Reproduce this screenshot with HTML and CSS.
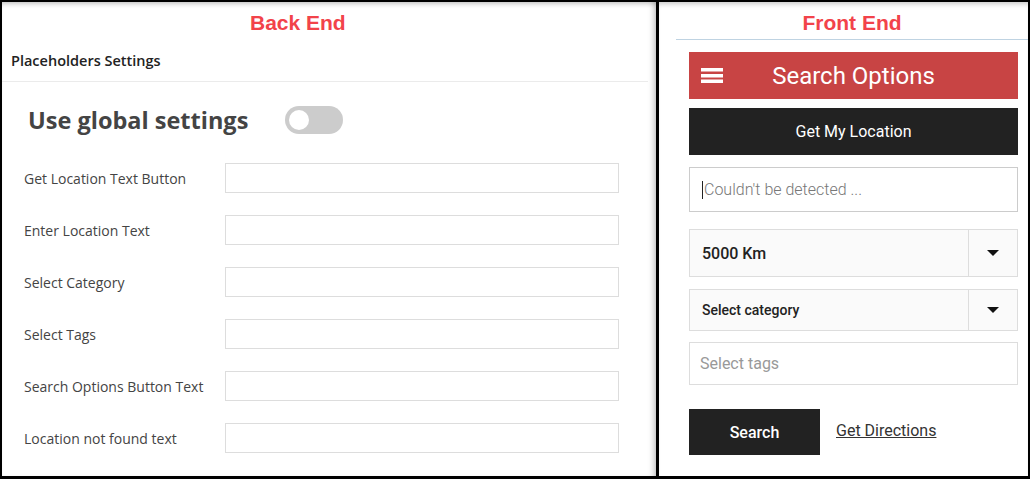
FILE: index.html
```html
<!DOCTYPE html>
<html lang="en">
<head>
  <meta charset="UTF-8">
  <title>Placeholders Settings</title>
  <link rel="stylesheet" href="styles.css">
</head>
<body>
  <div class="frame">
    <!-- Back End -->
    <div class="panel back">
      <div class="caption back-caption">Back End</div>
      <div class="section-title">Placeholders Settings</div>

      <div class="global-row">
        <span class="global-text">Use global settings</span>
        <span class="toggle"><span class="knob"></span></span>
      </div>

      <div class="rows">
        <div class="row"><label>Get Location Text Button</label><input type="text"></div>
        <div class="row"><label>Enter Location Text</label><input type="text"></div>
        <div class="row"><label>Select Category</label><input type="text"></div>
        <div class="row"><label>Select Tags</label><input type="text"></div>
        <div class="row"><label>Search Options Button Text</label><input type="text"></div>
        <div class="row"><label>Location not found text</label><input type="text"></div>
      </div>
    </div>

    <!-- Front End -->
    <div class="panel front">
      <div class="caption front-caption">Front End</div>
      <div class="front-body">
        <div class="options-bar">
          <svg class="burger" width="22" height="15" viewBox="0 0 22 15">
            <rect x="0" y="0" width="22" height="3.5" fill="#fff"/>
            <rect x="0" y="6" width="22" height="3.5" fill="#fff"/>
            <rect x="0" y="11.5" width="22" height="3.5" fill="#fff"/>
          </svg>
          <span class="options-title">Search Options</span>
          <span></span>
        </div>
        <div class="dark-btn location-btn">Get My Location</div>
        <div class="field location-field"><span class="caret"></span>Couldn't be detected ...</div>
        <div class="select distance"><span class="value">5000 Km</span><span class="arrow"></span></div>
        <div class="select category"><span class="value">Select category</span><span class="arrow"></span></div>
        <div class="field tags-field">Select tags</div>
        <div class="actions">
          <div class="dark-btn search-btn">Search</div>
          <a class="directions" href="#">Get Directions</a>
        </div>
      </div>
    </div>
  </div>
</body>
</html>
```

FILE: styles.css
```css
body {
  margin: 0;
  padding: 0;
  background-color: #ffffff;
}

.frame {
  display: flex;
  width: 1030px;
  height: 479px;
  box-sizing: border-box;
  border: 2px solid #000000;
  border-bottom-width: 3px;
  background-color: #ffffff;
}

.panel {
  box-sizing: border-box;
  height: 100%;
  box-shadow: inset 0 5px 5px -3px rgba(0, 0, 0, 0.22);
}

.caption {
  font-family: "Liberation Sans", Arial, sans-serif;
  font-size: 21px;
  font-weight: 700;
  line-height: 24px;
  color: #f2434a;
  padding-top: 9px;
}

/* Back End */
.back {
  width: 654px;
  flex-shrink: 0;
  box-shadow: inset 0 5px 5px -3px rgba(0, 0, 0, 0.22), inset -6px 0 6px -4px rgba(0, 0, 0, 0.25);
  font-family: "Open Sans", sans-serif;
}

.back-caption {
  padding-left: 248px;
}

.section-title {
  margin-top: 16px;
  margin-right: 8px;
  padding: 0 0 10px 9px;
  font-size: 14.5px;
  font-weight: 600;
  line-height: 20px;
  color: #222222;
  border-bottom: 1px solid #ebebeb;
}

.global-row {
  display: flex;
  align-items: center;
  margin-top: 24px;
  padding-left: 26px;
  height: 28px;
}

.global-text {
  font-size: 23.5px;
  font-weight: 700;
  line-height: 28px;
  color: #444444;
}

.toggle {
  display: flex;
  align-items: center;
  margin-left: 37px;
  width: 58px;
  height: 28px;
  border-radius: 14px;
  background-color: #cccccc;
  padding-left: 4px;
  box-sizing: border-box;
}

.toggle .knob {
  width: 20px;
  height: 20px;
  border-radius: 50%;
  background-color: #ffffff;
}

.rows {
  display: flex;
  flex-direction: column;
  gap: 22px;
  margin-top: 29px;
  padding-left: 22px;
}

.row {
  display: flex;
  align-items: center;
}

.row label {
  width: 201px;
  font-size: 14px;
  color: #444444;
}

.row input {
  width: 394px;
  height: 30px;
  box-sizing: border-box;
  margin: 0;
  border: 1px solid #dddddd;
  outline: none;
  background-color: #ffffff;
}

/* Front End */
.front {
  flex-grow: 1;
  border-left: 3px solid #000000;
  font-family: Roboto, sans-serif;
}

.front-caption {
  margin-left: 17px;
  padding-bottom: 4px;
  text-align: center;
  border-bottom: 1px solid #bfd3e2;
}

.front-body {
  display: flex;
  flex-direction: column;
  padding: 12px 10px 0 30px;
}

.options-bar {
  display: grid;
  grid-template-columns: 1fr auto 1fr;
  align-items: center;
  height: 47px;
  background-color: #c84444;
}

.burger {
  margin-left: 12px;
}

.options-title {
  font-size: 24px;
  color: #ffffff;
}

.dark-btn {
  display: flex;
  align-items: center;
  justify-content: center;
  background-color: #222222;
  color: #ffffff;
  font-size: 16px;
  font-weight: 500;
}

.location-btn {
  margin-top: 9px;
  height: 47px;
  font-weight: 400;
}

.field {
  display: flex;
  align-items: center;
  box-sizing: border-box;
  border: 1px solid #cccccc;
  padding-left: 12px;
  font-size: 16px;
  color: #888888;
}

.location-field {
  margin-top: 12px;
  height: 45px;
  font-weight: 300;
  color: #777777;
}

.caret {
  width: 1px;
  height: 18px;
  background-color: #222222;
  margin-right: 1px;
}

.select {
  display: flex;
  box-sizing: border-box;
  border: 1px solid #dddddd;
  background-color: #fafafa;
  color: #222222;
  font-weight: 500;
}

.select .value {
  flex-grow: 1;
  display: flex;
  align-items: center;
  padding-left: 12px;
}

.select .arrow {
  width: 48px;
  border-left: 1px solid #dddddd;
  display: flex;
  align-items: center;
  justify-content: center;
}

.select .arrow::after {
  content: "";
  border-left: 6px solid transparent;
  border-right: 6px solid transparent;
  border-top: 6px solid #111111;
}

.distance {
  margin-top: 17px;
  height: 48px;
  font-size: 16px;
}

.category {
  margin-top: 12px;
  height: 42px;
  font-size: 14px;
}

.tags-field {
  margin-top: 11px;
  height: 43px;
  border-color: #dddddd;
  padding-left: 10px;
  color: #999999;
}

.actions {
  display: flex;
  align-items: center;
  gap: 16px;
  margin-top: 24px;
}

.search-btn {
  width: 131px;
  height: 46px;
}

.directions {
  font-size: 16px;
  color: #333333;
  text-decoration: underline;
  margin-top: -4px;
}
```
